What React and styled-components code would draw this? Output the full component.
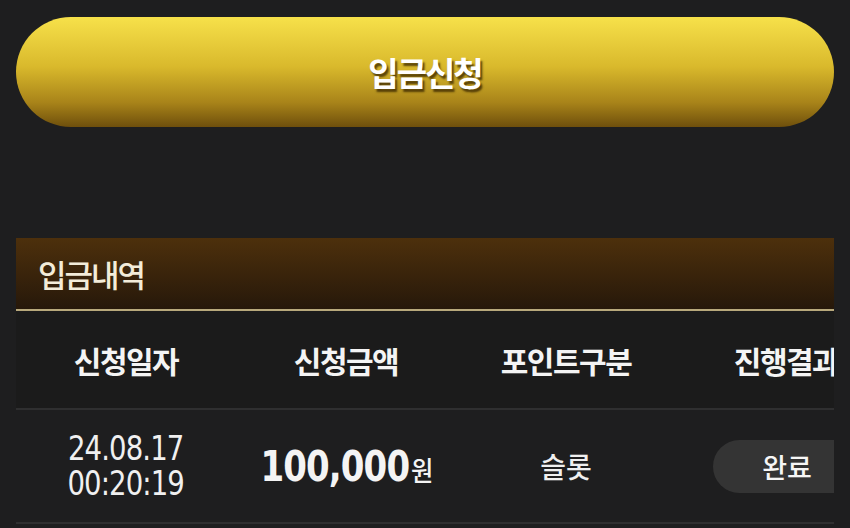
import React from 'react'
import styled, { createGlobalStyle } from 'styled-components'

const GlobalStyle = createGlobalStyle`
  html, body {
    margin: 0;
    padding: 0;
    background: #1e1e1f;
    font-family: 'Noto Sans CJK KR', 'Noto Sans', sans-serif;
    color: #f2f2f2;
  }
`

const COL_WIDTH = '220px'

const Page = styled.div`
  padding: 17px 16px 0;
  height: 528px;
  box-sizing: border-box;
  overflow: hidden;
`

const SubmitButton = styled.button`
  display: flex;
  align-items: center;
  justify-content: center;
  width: 100%;
  height: 110px;
  border: none;
  border-radius: 55px;
  background: linear-gradient(180deg, #f7e14a 0%, #d9b92c 45%, #a88319 78%, #6e4f0c 100%);
  color: #fff;
  font-family: 'Noto Sans CJK KR', sans-serif;
  font-size: 33px;
  font-weight: 700;
  letter-spacing: -2px;
  text-shadow: 2px 3px 2px rgba(60, 40, 0, 0.8);
  cursor: pointer;
`

const Section = styled.section`
  margin-top: 111px;
  overflow: hidden;
`

const SectionHead = styled.div`
  display: flex;
  align-items: center;
  height: 71px;
  padding: 0 22px;
  background: linear-gradient(180deg, #4d300c 0%, #3a240b 50%, #26180a 100%);
  border-bottom: 2px solid #b8a97c;
  color: #f3ecd9;
  font-size: 31px;
  font-weight: 500;
  letter-spacing: -2px;
`

/* the table is wider than the box and gets cut at the right edge */
const Table = styled.div`
  width: calc(${COL_WIDTH} * 4);
`

const Row = styled.div`
  display: grid;
  grid-template-columns: repeat(4, ${COL_WIDTH});
  align-items: center;
  height: ${({ $head }) => ($head ? '97px' : '112px')};
  background: ${({ $head }) => ($head ? '#1b1b1b' : '#1e1e1f')};
  border-bottom: 2px solid #2f2f30;
`

const HeadCell = styled.div`
  text-align: center;
  font-size: 30px;
  font-weight: 700;
  letter-spacing: -1.5px;
  color: #f4f4f4;
  white-space: nowrap;
`

const Cell = styled.div`
  display: flex;
  align-items: center;
  justify-content: center;
  text-align: center;
`

const DateText = styled.div`
  font-family: 'DejaVu Sans Condensed', 'Roboto', sans-serif;
  font-size: 34px;
  line-height: 35px;
  color: #f0f0f0;
  transform: scaleX(0.9);
  letter-spacing: -1px;
`

const Amount = styled.div`
  display: flex;
  align-items: baseline;
  font-family: 'DejaVu Sans Condensed', 'Roboto', sans-serif;
  font-weight: 700;
  font-size: 42px;
  color: #f4f4f4;
  letter-spacing: -1px;
  transform: scaleX(0.9);
`

const Unit = styled.span`
  font-family: 'Noto Sans CJK KR', sans-serif;
  font-size: 27px;
  font-weight: 500;
  margin-left: 2px;
`

const PlainText = styled.div`
  font-size: 28px;
  font-weight: 500;
  color: #f0f0f0;
`

const StatusPill = styled.div`
  display: flex;
  align-items: center;
  justify-content: center;
  width: 148px;
  height: 53px;
  margin-left: 2px;
  border-radius: 27px;
  background: #343434;
  font-size: 27px;
  font-weight: 500;
  color: #f6f6f6;
`

const heads = ['신청일자', '신청금액', '포인트구분', '진행결과']

export default function App() {
  return (
    <Page>
      <GlobalStyle />
      <SubmitButton>입금신청</SubmitButton>
      <Section>
        <SectionHead>입금내역</SectionHead>
        <Table>
          <Row $head>
            {heads.map((h) => (
              <HeadCell key={h}>{h}</HeadCell>
            ))}
          </Row>
          <Row>
            <Cell>
              <DateText>
                24.08.17
                <br />
                00:20:19
              </DateText>
            </Cell>
            <Cell>
              <Amount>
                100,000<Unit>원</Unit>
              </Amount>
            </Cell>
            <Cell>
              <PlainText>슬롯</PlainText>
            </Cell>
            <Cell>
              <StatusPill>완료</StatusPill>
            </Cell>
          </Row>
        </Table>
      </Section>
    </Page>
  )
}
